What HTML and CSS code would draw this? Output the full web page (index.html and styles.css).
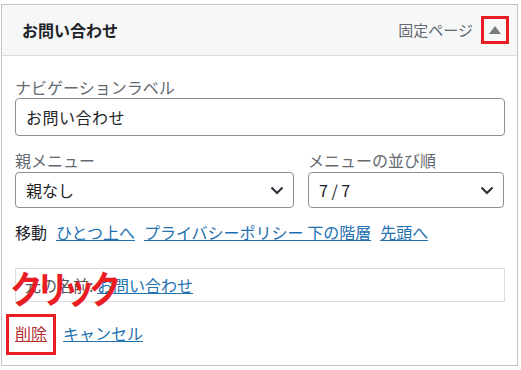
FILE: index.html
```html
<!DOCTYPE html>
<html lang="ja">
<head>
<meta charset="utf-8">
<title>メニュー項目</title>
<link rel="stylesheet" href="styles.css">
</head>
<body>
<div class="menu-item">
  <div class="item-bar">
    <span class="item-title">お問い合わせ</span>
    <span class="item-controls">
      <span class="item-type">固定ページ</span>
      <span class="item-toggle"><span class="tri"></span></span>
    </span>
  </div>
  <div class="item-settings">
    <div class="field">
      <label class="label">ナビゲーションラベル</label>
      <div class="input">お問い合わせ</div>
    </div>
    <div class="row2">
      <div class="field">
        <label class="label">親メニュー</label>
        <div class="select"><span>親なし</span><svg class="chev" width="14" height="9" viewBox="0 0 14 9"><polyline points="1.5,1.5 7,7 12.5,1.5" fill="none" stroke="#2c3338" stroke-width="2.2"/></svg></div>
      </div>
      <div class="field">
        <label class="label">メニューの並び順</label>
        <div class="select"><span>7 / 7</span><svg class="chev" width="14" height="9" viewBox="0 0 14 9"><polyline points="1.5,1.5 7,7 12.5,1.5" fill="none" stroke="#2c3338" stroke-width="2.2"/></svg></div>
      </div>
    </div>
    <div class="move">
      <span>移動</span>
      <a class="link">ひとつ上へ</a>
      <a class="link">プライバシーポリシー 下の階層</a>
      <a class="link">先頭へ</a>
    </div>
    <div class="original">元の名前: <a class="link">お問い合わせ</a></div>
    <div class="actions">
      <span class="del-wrap"><a class="link delete">削除</a></span>
      <a class="link">キャンセル</a>
    </div>
    <span class="annot">クリック</span>
  </div>
</div>
</body>
</html>
```
FILE: styles.css
```css
* { box-sizing: border-box; }
html, body { margin: 0; padding: 0; background: #fff; }
body {
  font-family: "Noto Sans CJK JP", "Noto Sans", sans-serif;
  color: #1d2327;
  font-size: 16px;
}
.menu-item {
  width: 517px;
  margin: 4px 0 0 1px;
  border: 1px solid #c3c4c7;
}
.item-bar {
  height: 51px;
  background: #f6f7f7;
  border-bottom: 1px solid #dcdcde;
  display: flex;
  align-items: center;
  justify-content: space-between;
  padding: 0 8px 0 20px;
}
.item-title {
  font-weight: bold;
  font-size: 16px;
  line-height: 20px;
}
.item-controls {
  display: flex;
  align-items: center;
  gap: 8px;
}
.item-type {
  color: #646970;
  font-size: 15px;
  line-height: 20px;
}
.item-toggle {
  width: 28px;
  height: 28px;
  border: 3px solid #ea1c24;
  display: flex;
  align-items: center;
  justify-content: center;
}
.tri {
  width: 0;
  height: 0;
  border-left: 6px solid transparent;
  border-right: 6px solid transparent;
  border-bottom: 8px solid #787c82;
  margin-top: -1px;
}
.item-settings {
  position: relative;
  padding: 21px 12px 22px 13px;
}
.field { display: flex; flex-direction: column; }
.label {
  display: block;
  color: #646970;
  font-size: 16px;
  line-height: 20px;
  margin-bottom: 1px;
}
.input {
  height: 38px;
  border: 1px solid #8c8f94;
  border-radius: 4px;
  padding: 0 10px;
  display: flex;
  align-items: center;
  font-size: 16px;
  letter-spacing: 0.5px;
}
.row2 {
  display: grid;
  grid-template-columns: 279px 196px;
  column-gap: 14px;
  margin-top: 14px;
}
.row2 .label { margin-bottom: 2px; }
.select {
  height: 36px;
  border: 1px solid #8c8f94;
  border-radius: 4px;
  padding: 0 9px 0 10px;
  display: flex;
  align-items: center;
  justify-content: space-between;
  font-size: 16px;
  white-space: pre;
}
.move {
  margin-top: 14px;
  line-height: 20px;
  display: flex;
  gap: 9px;
  font-size: 16px;
}
.link {
  color: #2271b1;
  text-decoration: underline;
  cursor: pointer;
}
.original {
  margin-top: 26px;
  height: 34px;
  border: 1px solid #dcdcde;
  padding: 0 9px;
  display: flex;
  align-items: center;
  color: #50575e;
  white-space: pre;
}
.actions {
  margin-top: 21px;
  line-height: 20px;
  display: flex;
  gap: 16px;
}
.del-wrap { position: relative; }
.del-wrap::after {
  content: "";
  position: absolute;
  left: -9px;
  right: -9px;
  top: -9px;
  bottom: -12px;
  border: 3px solid #ea1c24;
}
.delete { color: #b32d2e; }
.annot {
  position: absolute;
  left: 8px;
  top: 209px;
  font-size: 38px;
  font-weight: 700;
  color: #ea1c24;
  line-height: 44px;
  letter-spacing: -7px;
  transform: scaleX(0.85);
  transform-origin: left center;
}
```
